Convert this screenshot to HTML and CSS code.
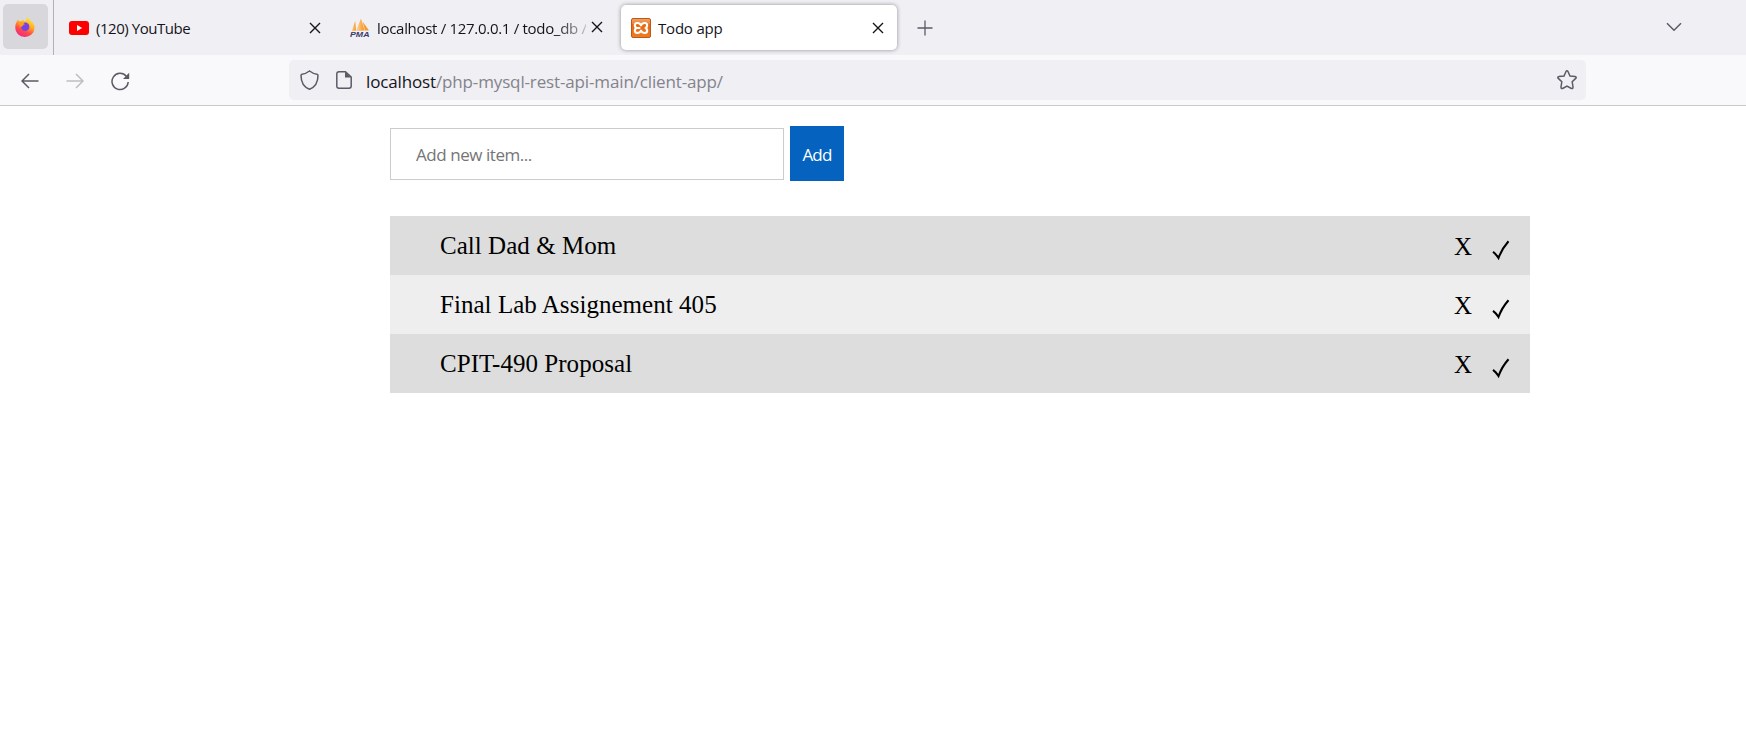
FILE: index.html
```html
<!DOCTYPE html>
<html lang="en">
<head>
<meta charset="utf-8">
<title>Todo app</title>
<link rel="stylesheet" href="styles.css">
</head>
<body>
<svg width="0" height="0" class="defs">
  <defs>
    <linearGradient id="flame" x1="0.8" y1="0" x2="0.3" y2="1">
      <stop offset="0" stop-color="#fff13a"/><stop offset=".4" stop-color="#ffad22"/><stop offset=".7" stop-color="#ff4b45"/><stop offset="1" stop-color="#f0268d"/>
    </linearGradient>
    <linearGradient id="sail" x1="0" y1="0" x2="1" y2="0">
      <stop offset="0" stop-color="#fcd9ac"/><stop offset="1" stop-color="#f79318"/>
    </linearGradient>
    <linearGradient id="tile" x1="0" y1="0" x2="0" y2="1">
      <stop offset="0" stop-color="#f0a468"/><stop offset=".28" stop-color="#ec8238"/><stop offset=".3" stop-color="#e8670f"/><stop offset="1" stop-color="#f07c22"/>
    </linearGradient>
    <symbol id="x" viewBox="0 0 12 12"><path d="M1 1l10 10M11 1L1 11" fill="none" stroke="#15141a" stroke-width="1.4"/></symbol>
    <symbol id="check" viewBox="0 0 18 20"><path d="M1 11.800Q3.500 13.500 6.500 18Q10 8.500 16.500 1.200" fill="none" stroke="#000" stroke-width="2.100"/></symbol>
  </defs>
</svg>
<header class="tabs">
  <div class="pinned">
    <svg width="20" height="20" viewBox="0 0 20 20">
      <path d="M.3 11C.2 7 1.300 5.500 2 4.500L2.400 2.700 4.600 4.200 6.400 4.100 8.400 2.700 9 4.200 11.500 3.500C11 1.500 12.200.8 13 .2 13.500 2 15 2.500 16.200 4.500L17.400 5.200C19 7 19.800 9 19.500 11.500A9.600 8.700 0 0 1 .3 11Z" fill="url(#flame)"/>
      <circle cx="10.200" cy="9.800" r="4.200" fill="#7542e5"/>
      <path d="M3.500 6.500Q6 4.800 8.600 6.100L10 7.300Q8 7.500 7.700 8.900L5.800 10Z" fill="#ff9a23"/>
    </svg>
  </div>
  <div class="tab tab-video">
    <svg width="20" height="14" viewBox="0 0 20 14"><rect width="20" height="14" rx="3" fill="#f00"/><path d="M8 4l5.200 3L8 10Z" fill="#fff"/></svg>
    <span class="label label-video">(120) YouTube</span>
    <svg class="close" width="12" height="12"><use href="#x"/></svg>
  </div>
  <div class="tab tab-db">
    <svg width="20" height="20" viewBox="0 0 20 20">
      <path d="M1.500 13.500L5.200 3 6 12.500Z" fill="url(#sail)"/>
      <path d="M6 13L11 .5 14.500 12.500Z" fill="url(#sail)"/><path d="M12.500 3.500L19 12.500H15Z" fill="#f79a2a"/>
      <text x="0" y="19" class="pma" textLength="19.500" lengthAdjust="spacingAndGlyphs">PMA</text>
    </svg>
    <span class="label label-db">localhost / 127.0.0.1 / todo_db /</span>
    <svg class="close" width="12" height="12"><use href="#x"/></svg>
  </div>
  <div class="tab tab-active">
    <svg width="20" height="20" viewBox="0 0 20 20">
      <rect x=".5" y=".5" width="19" height="19" rx="1.500" fill="url(#tile)" stroke="#b9591c"/>
      <path d="M10 7.300Q9 5 6.400 5 3.800 5 3.800 7.500 3.800 9 5.400 10 3.800 11 3.800 12.500 3.800 15 6.400 15 9 15 10 12.700 11 15 13.600 15 16.200 15 16.200 12.500 16.200 11 14.600 10 16.200 9 16.200 7.500 16.200 5 13.600 5 11 5 10 7.300M5.400 10H8.500" fill="none" stroke="#fff" stroke-width="2.100" stroke-linecap="round" stroke-linejoin="round"/>
    </svg>
    <span class="label label-todo">Todo app</span>
    <svg class="close" width="12" height="12"><use href="#x"/></svg>
  </div>
  <svg class="plus" width="16" height="16" viewBox="0 0 16 16"><path d="M8 .5v15M.5 8h15" stroke="#5b5b66" stroke-width="1.300"/></svg>
  <svg class="chevron" width="16" height="10" viewBox="0 0 16 10"><path d="M1 1.200l7 7 7-7" fill="none" stroke="#5b5b66" stroke-width="1.500"/></svg>
</header>
<nav class="toolbar">
  <svg class="back" width="18" height="16" viewBox="0 0 18 16"><path d="M17.500 8H1M8 1L1 8l7 7" fill="none" stroke="#5b5b66" stroke-width="1.500"/></svg>
  <svg class="forward" width="18" height="16" viewBox="0 0 18 16"><path d="M.5 8H17M10 1l7 7-7 7" fill="none" stroke="#bdbdc3" stroke-width="1.500"/></svg>
  <svg class="reload" width="19" height="19" viewBox="0 0 19 19"><path d="M15.300 4.200A8.100 8.100 0 1 0 17.200 10" fill="none" stroke="#5b5b66" stroke-width="1.500"/><path d="M18.200.8V7H12Z" fill="#5b5b66"/></svg>
  <div class="address">
    <svg width="19" height="20" viewBox="0 0 19 20"><path d="M9.500 1Q13 3.700 17 4.200 18 4.400 18 5.400C18 12 15 17 9.500 19.200 4 17 1 12 1 5.400Q1 4.400 2 4.200 6 3.700 9.500 1Z" fill="none" stroke="#5b5b66" stroke-width="1.500"/></svg>
    <svg class="page" width="16" height="18" viewBox="0 0 16 18"><path d="M3 .8H9.500L15.200 6V15Q15.200 17.200 13 17.200H3Q.8 17.200.8 15V3Q.8.8 3 .8Z" fill="none" stroke="#5b5b66" stroke-width="1.500"/><path d="M9 .8V6.500H15.200Z" fill="#5b5b66"/></svg>
    <span class="url"><b class="host">localhost</b>/php-mysql-rest-api-main/client-app/</span>
    <svg class="star" width="20" height="20" viewBox="0 0 20 20"><path d="M9 1.500Q10 0 11 1.500L13 6 18 6.600Q20 7 18.700 8.400L15.200 11.800 16 17Q16 19 14.400 18.500L10 16 5.600 18.500Q4 19 4 17L4.800 11.800 1.300 8.400Q0 7 2 6.600L7 6Z" fill="none" stroke="#5b5b66" stroke-width="1.500"/></svg>
  </div>
</nav>
<main class="content">
  <form class="add-form">
    <input class="new-item" type="text" placeholder="Add new item...">
    <button class="add" type="button">Add</button>
  </form>
  <ul class="items">
    <li class="item"><span class="name">Call Dad &amp; Mom</span><span class="remove">X</span><svg class="done" width="18" height="20"><use href="#check"/></svg></li>
    <li class="item"><span class="name">Final Lab Assignement 405</span><span class="remove">X</span><svg class="done" width="18" height="20"><use href="#check"/></svg></li>
    <li class="item"><span class="name">CPIT-490 Proposal</span><span class="remove">X</span><svg class="done" width="18" height="20"><use href="#check"/></svg></li>
  </ul>
</main>
</body>
</html>
```
FILE: styles.css
```css
* { box-sizing: border-box; }
body { margin: 0; background: #fff; font-family: "Open Sans", "Noto Sans", sans-serif; overflow: hidden; }
svg { display: block; flex: none; }
.defs { position: absolute; }

.tabs { display: flex; align-items: center; height: 55px; background: #f0eff4; color: #15141a; }
.pinned { display: flex; align-items: center; justify-content: center; width: 45px; height: 45px; margin: 0 5px 2px 3px; padding-right: 1px; border-radius: 5px; background: #d8d7dc; }
.tab { display: flex; align-items: center; height: 45px; border-radius: 5px; }
.tab-video { width: 281px; height: 55px; padding: 1px 13px 0 15px; border-left: 1px solid #b1b1b8; border-radius: 0; }
.tab-db { width: 287px; padding: 0 18px 0 16px; }
.tab-active { width: 276px; padding: 2px 13px 0 10px; margin-bottom: 1px; background: #fff; box-shadow: 0 0 4px rgba(0, 0, 0, .4); }
.label { margin: 0 0 0 7px; font-size: 15px; line-height: 22px; white-space: nowrap; }
.label-video { letter-spacing: -.45px; }
.label-db { width: 209px; overflow: hidden; letter-spacing: -.3px; -webkit-mask-image: linear-gradient(to right, #000 86%, transparent 104%); mask-image: linear-gradient(to right, #000 86%, transparent 104%); }
.label-todo { letter-spacing: -.2px; }
.close { margin: 0 0 1px auto; }
.plus { margin-left: 20px; }
.chevron { margin: 0 64px 2px auto; }
.pma { font: italic bold 8px "Liberation Sans", sans-serif; fill: #393b6d; }

.toolbar { display: flex; align-items: center; height: 51px; padding: 0 160px 0 21px; border-bottom: 1px solid #c9c9ce; background: #f9f9fb; }
.back { margin-top: 1px; }
.forward { margin: 1px 0 0 27px; }
.reload { margin: 2px 0 0 27px; }
.address { display: flex; align-items: center; width: 1297px; height: 40px; margin-left: auto; padding: 0 9px 0 11px; border-radius: 5px; background: #f0eff4; }
.page { margin-left: 17px; }
.url { margin: 3px 0 0 14px; font-size: 17px; line-height: 24px; letter-spacing: -.14px; color: #83838a; white-space: nowrap; }
.host { font-weight: 400; color: #15141a; }
.star { margin-left: auto; }

.content { width: 1140px; margin-left: 390px; padding-top: 20px; }
.add-form { display: flex; align-items: center; gap: 6px; height: 55px; }
.new-item { width: 394px; height: 52px; padding: 2px 25px 0; border: 1px solid #ccc; font: 17px "Open Sans", sans-serif; letter-spacing: -.45px; color: #222; }
.new-item::placeholder { color: #757575; opacity: 1; }
.add { width: 54px; height: 55px; padding: 2px 0 0; border: 0; background: #0563bf; color: #fff; font: 17px "Open Sans", sans-serif; letter-spacing: -.8px; }
.items { margin: 35px 0 0; padding: 0; list-style: none; font: 25px "Liberation Serif", serif; letter-spacing: .04px; color: #000; }
.item { display: flex; align-items: center; height: 59px; padding: 0 20px 0 50px; background: #ddd; }
.item:nth-child(even) { background: #eee; }
.remove { margin: 2px 20px 0 auto; }
.done { margin-top: 8px; }
```
